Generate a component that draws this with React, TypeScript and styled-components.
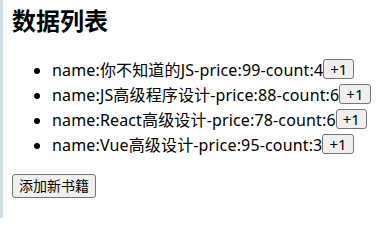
import React, {useState} from "react";
import styled, {createGlobalStyle} from "styled-components";

const GlobalStyle = createGlobalStyle`
    html, body {
        margin: 0;
        padding: 0;
        background: #ffffff;
    }
    body {
        font-family: "Noto Sans", "Noto Sans CJK SC", sans-serif;
        color: #000000;
    }
`;

const Page = styled.div`
    height: 218px;
    box-sizing: border-box;
    border-left: 3px solid #cbdfe5;
    padding: 7px 0 0 9px;
    overflow: hidden;
`;

const Title = styled.h2`
    margin: 0;
    font-size: 24px;
    line-height: 28px;
    font-weight: bold;
`;

const BookList = styled.ul`
    margin: 23px 0 0;
    padding-left: 40px;
`;

const BookItem = styled.li`
    font-size: 16px;
    line-height: 25px;
    white-space: nowrap;
    letter-spacing: 0.15px;
`;

const Button = styled.button`
    margin: 0;
    font-family: "Noto Sans", "Noto Sans CJK SC", sans-serif;
    letter-spacing: 0;
    color: #000000;
    background: #efefef;
    border: 1px solid #767676;
    border-radius: 3px;
    cursor: pointer;
`;

const PlusButton = styled(Button)`
    height: 20px;
    padding: 0 6px;
    font-size: 15px;
    line-height: 18px;
    vertical-align: 1px;
`;

const AddButton = styled(Button)`
    display: block;
    margin-top: 16px;
    height: 24px;
    padding: 0 6px;
    font-size: 14px;
    line-height: 22px;
`;

type Book = {
    name: string;
    price: number;
    count: number;
};

const initialBooks: Book[] = [
    {name: "你不知道的JS", price: 99, count: 4},
    {name: "JS高级程序设计", price: 88, count: 6},
    {name: "React高级设计", price: 78, count: 6},
    {name: "Vue高级设计", price: 95, count: 3},
];

const App = () => {
    const [books, setBooks] = useState<Book[]>(initialBooks);

    const addCount = (index: number) => {
        setBooks(books.map((b, i) => (i === index ? {...b, count: b.count + 1} : b)));
    };

    const addBook = () => {
        setBooks([...books, {name: "新书籍", price: 66, count: 1}]);
    };

    return (
        <>
            <GlobalStyle/>
            <Page>
                <Title>数据列表</Title>
                <BookList>
                    {books.map((book, index) => (
                        <BookItem key={book.name}>
                            name:{book.name}-price:{book.price}-count:{book.count}
                            <PlusButton onClick={e => addCount(index)}>+1</PlusButton>
                        </BookItem>
                    ))}
                </BookList>
                <AddButton onClick={addBook}>添加新书籍</AddButton>
            </Page>
        </>
    );
};

export default App;
